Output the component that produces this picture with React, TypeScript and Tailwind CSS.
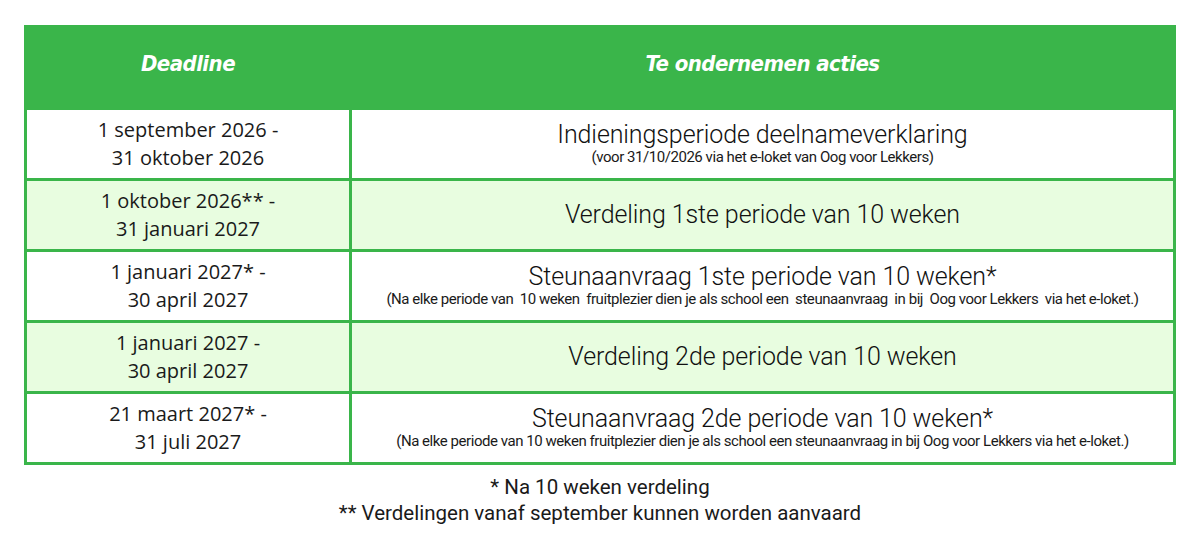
import React from 'react';

const rows = [
  {
    from: '1 september 2026 -',
    to: '31 oktober 2026',
    title: 'Indieningsperiode deelnameverklaring',
    note: '(voor 31/10/2026 via het e-loket van Oog voor Lekkers)',
    shaded: false,
  },
  {
    from: '1 oktober 2026** -',
    to: '31 januari 2027',
    title: 'Verdeling 1ste periode van 10 weken',
    shaded: true,
  },
  {
    from: '1 januari 2027* -',
    to: '30 april 2027',
    title: 'Steunaanvraag 1ste periode van 10 weken*',
    note: '(Na elke periode van  10 weken  fruitplezier dien je als school een  steunaanvraag  in bij  Oog voor Lekkers  via het e-loket.)',
    shaded: false,
  },
  {
    from: '1 januari 2027 -',
    to: '30 april 2027',
    title: 'Verdeling 2de periode van 10 weken',
    shaded: true,
  },
  {
    from: '21 maart 2027* -',
    to: '31 juli 2027',
    title: 'Steunaanvraag 2de periode van 10 weken*',
    note: '(Na elke periode van 10 weken fruitplezier dien je als school een steunaanvraag in bij Oog voor Lekkers via het e-loket.)',
    shaded: false,
  },
];

const App = () => {
  return (
    <div className="min-h-screen bg-white px-[24px] pt-[25px] font-['Open_Sans',sans-serif] text-[#1a1a1a]">
      <table className="w-[1152px] border-collapse">
        <thead>
          <tr className="h-[82px] bg-[#3ab54a]">
            <th className="w-[325px] border-[3px] border-[#3ab54a] pb-[8px] text-[22px] font-bold italic text-white font-['DejaVu_Sans_Condensed','DejaVu_Sans',sans-serif] tracking-tight">
              Deadline
            </th>
            <th className="border-[3px] border-[#3ab54a] pb-[8px] text-[22px] font-bold italic text-white font-['DejaVu_Sans_Condensed','DejaVu_Sans',sans-serif] tracking-tight">
              Te ondernemen acties
            </th>
          </tr>
        </thead>
        <tbody>
          {rows.map((r, i) => (
            <tr key={i} className={`h-[71px] ${r.shaded ? 'bg-[#e8fde0]' : 'bg-white'}`}>
              <td className="border-[3px] border-[#3ab54a] text-center text-[20px] leading-[28px]">
                <div>{r.from}</div>
                <div>{r.to}</div>
              </td>
              <td className="border-[3px] border-[#3ab54a] text-center font-['Roboto',sans-serif]">
                <div className="text-[25px] font-light leading-[26px] tracking-[-0.1px] text-[#111]">{r.title}</div>
                {r.note && (
                  <div className="whitespace-pre text-[15px] leading-[19px] tracking-[-0.45px]">{r.note}</div>
                )}
              </td>
            </tr>
          ))}
        </tbody>
      </table>
      <div className="mt-[9px] text-center text-[20.5px] leading-[26px] font-['Roboto',sans-serif]">
        <p>* Na 10 weken verdeling</p>
        <p>** Verdelingen vanaf september kunnen worden aanvaard</p>
      </div>
    </div>
  );
};

export default App;
